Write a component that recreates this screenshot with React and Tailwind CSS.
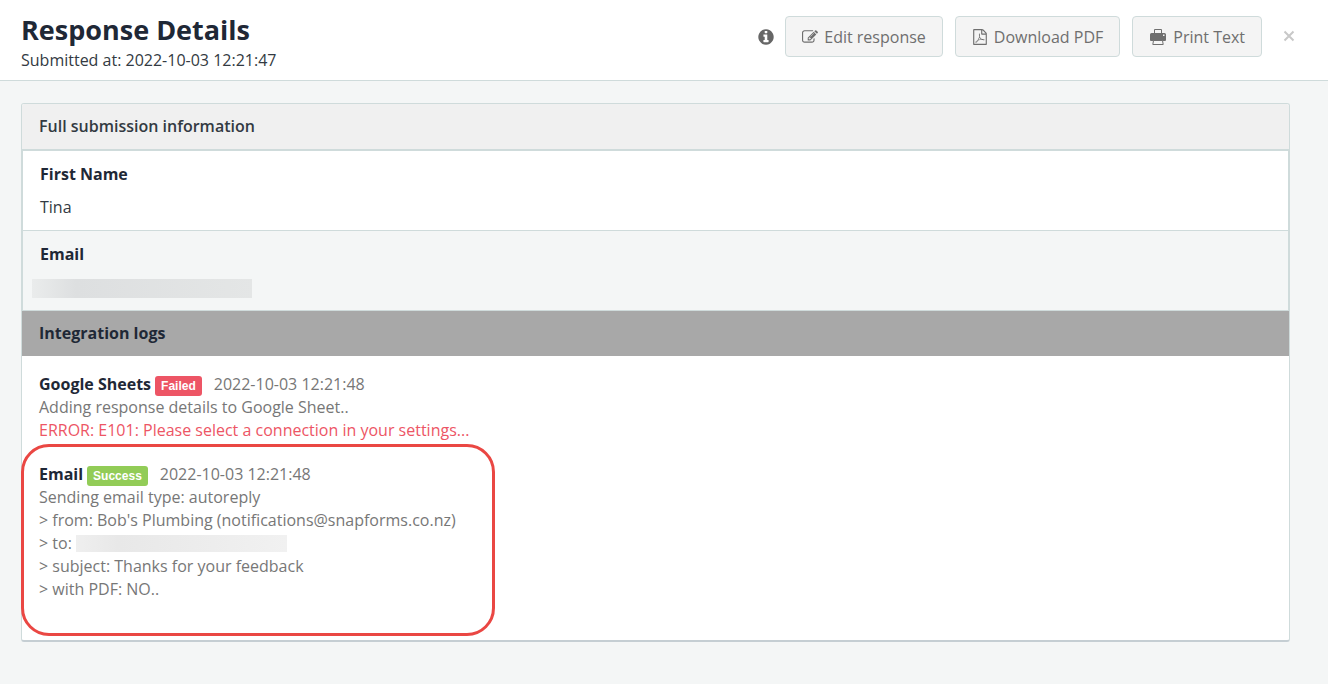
const FA_PATHS = {
  info: 'M1152 1376v-160q0-14-9-23t-23-9h-96v-512q0-14-9-23t-23-9h-320q-14 0-23 9t-9 23v160q0 14 9 23t23 9h96v320h-96q-14 0-23 9t-9 23v160q0 14 9 23t23 9h448q14 0 23-9t9-23zm-128-896v-160q0-14-9-23t-23-9h-192q-14 0-23 9t-9 23v160q0 14 9 23t23 9h192q14 0 23-9t9-23zm640 416q0 209-103 385.5t-279.5 279.5-385.5 103-385.5-103-279.5-279.5-103-385.5 103-385.5 279.5-279.5 385.5-103 385.5 103 279.5 279.5 103 385.5z',
  edit: 'M888 1184l116-116-152-152-116 116v56h96v96h56zm440-720q-16-16-33 1l-350 350q-17 17-1 33t33-1l350-350q17-17 1-33zm80 594v190q0 119-84.5 203.5t-203.5 84.5h-832q-119 0-203.5-84.5t-84.5-203.5v-832q0-119 84.5-203.5t203.5-84.5h832q63 0 117 25 15 7 18 23 3 17-9 29l-49 49q-14 14-32 8-23-6-45-6h-832q-66 0-113 47t-47 113v832q0 66 47 113t113 47h832q66 0 113-47t47-113v-126q0-13 9-22l64-64q15-15 35-7t20 29zm-96-738l288 288-672 672h-288v-288zm444 132l-92 92-288-288 92-92q28-28 68-28t68 28l152 152q28 28 28 68t-28 68z',
  pdf: 'M1596 380q28 28 48 76t20 88v1152q0 40-28 68t-68 28h-1344q-40 0-68-28t-28-68v-1600q0-40 28-68t68-28h896q40 0 88 20t76 48zm-444-244v376h376q-10-29-22-41l-313-313q-12-12-41-22zm384 1528v-1024h-416q-40 0-68-28t-28-68v-416h-768v1536h1280zm-514-593q33 26 84 56 59-7 117-7 147 0 177 49 16 22 2 52 0 1-1 2l-2 2v1q-6 38-71 38-48 0-115-20t-130-53q-221 24-392 83-153 262-242 262-15 0-28-7l-24-12q-1-1-6-5-10-10-6-36 9-40 56-91.5t132-96.5q14-9 23 6 2 2 2 4 52-85 107-197 68-136 104-262-24-82-30.5-159.5t6.5-127.5q11-40 42-40h22q23 0 35 15 18 21 9 68-2 6-4 8 1 3 1 8v30q-2 123-14 192 55 164 146 238zm-576 411q52-24 137-158-51 40-87.5 84t-49.5 74zm398-920q-15 42-2 132 1-7 7-44 0-3 7-43 1-4 4-8-1-1-1-2t-1-2-1-3q-1-22-13-36 0 1-1 2v2zm-124 661q135-54 284-81-2-1-13-9.5t-16-13.5q-76-67-127-176-27 86-83 197-30 56-45 83zm646-16q-24-24-140-24 76 28 124 28 14 0 18-1 0-1-2-3z',
}

function FaIcon({ name, className }) {
  return (
    <svg viewBox="0 0 1792 1792" fill="currentColor" aria-hidden="true" className={className}>
      <path d={FA_PATHS[name]} />
    </svg>
  )
}

function PrintIcon({ className }) {
  return (
    <svg viewBox="0 0 18 18" fill="currentColor" aria-hidden="true" className={className}>
      <path d="M5.500 5V1.500h7V5" fill="none" stroke="currentColor" />
      <path d="M2.500 5h13A1.500 1.500 0 0 1 17 6.500V12a1 1 0 0 1-1 1H2a1 1 0 0 1-1-1V6.500A1.500 1.500 0 0 1 2.500 5z" />
      <path d="M4.500 12.500h9l.7 4H3.800z" fill="#f4f4f4" stroke="currentColor" />
      <path d="M14 6.500h1.500V8H14z" fill="#f4f4f4" />
    </svg>
  )
}

function ToolbarButton({ icon, children }) {
  return (
    <button
      type="button"
      className="flex h-[41px] items-center gap-1.5 rounded border border-[#cfdbdb] bg-[#f4f4f4] px-4 text-base whitespace-nowrap text-[#6f6f6f]"
    >
      {icon}
      {children}
    </button>
  )
}

function LogEntry({ name, status, badge, time, children }) {
  return (
    <div className="leading-[23px] text-[#777777]">
      <div className="flex items-center">
        <h3 className="font-bold text-[#1f2836]">{name}</h3>
        <span className={`ml-1 mt-1 h-5 rounded-[3px] px-1.5 font-['Liberation_Sans',sans-serif] text-[12px] leading-5 font-bold text-white ${badge}`}>
          {status}
        </span>
        <time className="ml-3">{time}</time>
      </div>
      {children}
    </div>
  )
}

export default function App() {
  return (
    <div className="min-h-screen bg-[#f4f6f6] font-['Open_Sans',sans-serif] text-base text-[#333a42]">
      <header className="flex items-start justify-between border-b border-[#cfdbdb] bg-white pr-8 pb-2 pl-[21px]">
        <div className="pt-3">
          <h1 className="text-[27px] leading-9 font-bold text-[#1f2836]">Response Details</h1>
          <p className="leading-6">Submitted at: 2022-10-03 12:21:47</p>
        </div>
        <div className="flex items-center gap-3 pt-4">
          <button type="button" aria-label="Information" className="-mr-0.5 text-[#666666]">
            <FaIcon name="info" className="size-[18px]" />
          </button>
          <ToolbarButton icon={<FaIcon name="edit" className="size-4" />}>Edit response</ToolbarButton>
          <ToolbarButton icon={<FaIcon name="pdf" className="size-4" />}>Download PDF</ToolbarButton>
          <ToolbarButton icon={<PrintIcon className="size-[18px]" />}>Print Text</ToolbarButton>
          <button type="button" aria-label="Close" className="ml-2 text-[#c8c8c8]">
            <svg viewBox="0 0 14 14" fill="none" stroke="currentColor" strokeWidth="2" className="size-[14px]">
              <path d="M2.500 1.500l9 9M11.500 1.500l-9 9" />
            </svg>
          </button>
        </div>
      </header>

      <main className="pt-[22px] pr-[38px] pb-11 pl-[21px]">
        <section className="rounded-[3px] border border-b-2 border-[#cfdbdb] border-b-[#c5ced3] bg-white">
          <h2 className="rounded-t-[2px] bg-[#f0f0f0] px-[17px] py-[11px] leading-[23px] font-semibold text-[#333a42]">
            Full submission information
          </h2>

          <dl className="border border-t-2 border-[#cfdbdb]">
            <div className="border-b border-[#cfdbdb] px-[17px] pt-3 pb-[11px]">
              <dt className="leading-[23px] font-bold text-[#1f2836]">First Name</dt>
              <dd className="pt-2.5 leading-[23px]">Tina</dd>
            </div>
            <div className="bg-[#f4f6f6] px-[17px] pt-3 pb-3">
              <dt className="leading-[23px] font-bold text-[#1f2836]">Email</dt>
              <dd className="-ml-2 pt-[13px]">
                <div className="h-[19px] w-[220px] bg-linear-to-r from-[#eaecec] via-[#dddfe0] via-20% to-[#e4e6e6]" />
              </dd>
            </div>
          </dl>

          <h2 className="bg-[#a8a8a8] px-[17px] py-[11px] leading-[23px] font-bold text-[#1f2836]">
            Integration logs
          </h2>

          <div className="px-[17px] pt-4 pb-1">
            <LogEntry name="Google Sheets" status="Failed" badge="bg-[#ed5565]" time="2022-10-03 12:21:48">
              <p>Adding response details to Google Sheet..</p>
              <p className="text-[#ed5565]">ERROR: E101: Please select a connection in your settings...</p>
            </LogEntry>

            <div className="-ml-[18px] mt-0.5 w-[474px] rounded-[28px] border-[3px] border-[#ea4743] px-[15px] pt-[15px] pb-8">
              <LogEntry name="Email" status="Success" badge="bg-[#92cc57]" time="2022-10-03 12:21:48">
                <p>Sending email type: autoreply</p>
                <p>&gt; from: Bob's Plumbing (notifications@snapforms.co.nz)</p>
                <p className="flex items-center gap-1">
                  &gt; to:
                  <span className="h-[17px] w-[211px] bg-linear-to-r from-[#efefef] via-[#e8e8e8] via-20% to-[#f1f1f1]" />
                </p>
                <p>&gt; subject: Thanks for your feedback</p>
                <p>&gt; with PDF: NO..</p>
              </LogEntry>
            </div>
          </div>
        </section>
      </main>
    </div>
  )
}
